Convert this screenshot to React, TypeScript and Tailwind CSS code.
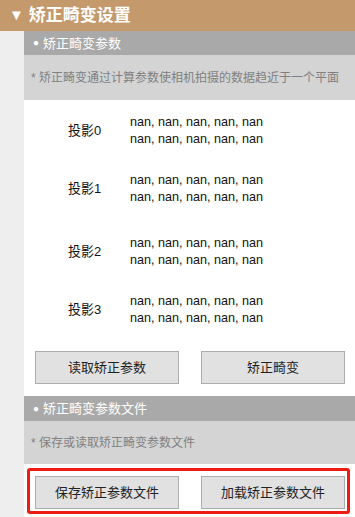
import React from "react";

const FONT = "font-['Liberation_Sans','Noto_Sans_CJK_SC',sans-serif]";

const projections = [
  { label: "投影0", mt: "mt-[14px]" },
  { label: "投影1", mt: "mt-[24px]" },
  { label: "投影2", mt: "mt-[29px]" },
  { label: "投影3", mt: "mt-[24px]" },
];

function SubHeader({ title, h }: { title: string; h: string }) {
  return (
    <div className={`${h} bg-[#a9a9a9] flex items-center pl-[9px] text-white text-[13px] leading-none`}>
      <span className="text-[10px] mr-[4px]">●</span>
      {title}
    </div>
  );
}

function Note({ text, h }: { text: string; h: string }) {
  return (
    <div className={`${h} bg-[#d4d4d4] flex items-center pl-[7px] text-[#808080] text-[12px]`}>
      {text}
    </div>
  );
}

function Btn({ text }: { text: string }) {
  return (
    <button className="w-[144px] h-[33px] bg-[#e1e1e1] border border-[#adadad] text-[13px] text-[#222]">
      {text}
    </button>
  );
}

export default function App() {
  return (
    <div className={`w-[355px] h-[517px] bg-[#eeeeee] overflow-hidden ${FONT}`}>
      {/* Section title */}
      <div className="h-[31px] bg-[#c49a6c] flex items-center pl-[9px] text-white text-[17px] font-bold">
        <span className="text-[15px] mr-[5px]">▼</span>
        矫正畸变设置
      </div>

      <div className="ml-[24px] bg-white">
        <SubHeader title="矫正畸变参数" h="h-[24px]" />
        <Note text="* 矫正畸变通过计算参数使相机拍摄的数据趋近于一个平面" h="h-[45px]" />

        <div className="pb-[12px]">
          {projections.map((p) => (
            <div key={p.label} className={`${p.mt} flex items-center`}>
              <span className="w-[62px] ml-[44px] text-[13px] text-[#111]">{p.label}</span>
              <div className="text-[12.6px] leading-[17px] text-[#111]">
                <div>nan, nan, nan, nan, nan</div>
                <div>nan, nan, nan, nan, nan</div>
              </div>
            </div>
          ))}

          <div className="mt-[24px] flex gap-[22px] pl-[11px]">
            <Btn text="读取矫正参数" />
            <Btn text="矫正畸变" />
          </div>
        </div>

        <SubHeader title="矫正畸变参数文件" h="h-[25px]" />
        <Note text="* 保存或读取矫正畸变参数文件" h="h-[43px]" />

        <div className="pt-[4px] pb-[3px] pl-[3px] pr-[5px]">
          <div className="border-[3px] border-[#ee1c12] rounded-[3px] pt-[5px] pb-[2px] pl-[5px] flex gap-[22px]">
            <Btn text="保存矫正参数文件" />
            <Btn text="加载矫正参数文件" />
          </div>
        </div>
      </div>
    </div>
  );
}
